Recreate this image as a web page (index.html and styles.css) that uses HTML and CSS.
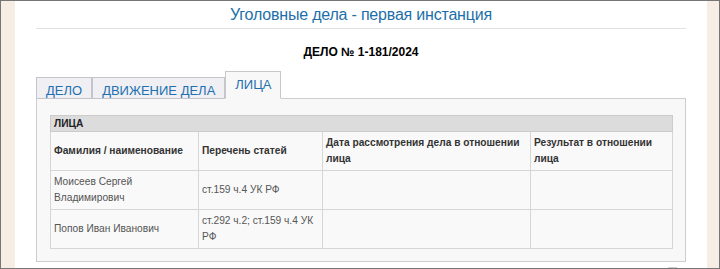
FILE: index.html
```html
<!DOCTYPE html>
<html lang="ru">
<head>
<meta charset="utf-8">
<title>Уголовные дела - первая инстанция</title>
<link rel="stylesheet" href="styles.css">
</head>
<body>
<div class="frame">
  <div class="page">
    <h1 class="title">Уголовные дела - первая инстанция</h1>
    <div class="rule"></div>
    <div class="case-no">ДЕЛО № 1-181/2024</div>
    <div class="tabs">
      <ul class="tab-list">
        <li class="tab">ДЕЛО</li>
        <li class="tab">ДВИЖЕНИЕ ДЕЛА</li>
        <li class="tab tab-active">ЛИЦА</li>
      </ul>
      <div class="panel">
        <table class="grid">
          <colgroup>
            <col class="c1"><col class="c2"><col class="c3"><col class="c4">
          </colgroup>
          <tr><th class="caption" colspan="4">ЛИЦА</th></tr>
          <tr class="head">
            <th>Фамилия / наименование</th>
            <th>Перечень статей</th>
            <th>Дата рассмотрения дела в отношении лица</th>
            <th>Результат в отношении лица</th>
          </tr>
          <tr>
            <td>Моисеев Сергей Владимирович</td>
            <td>ст.159 ч.4 УК РФ</td>
            <td></td>
            <td></td>
          </tr>
          <tr>
            <td>Попов Иван Иванович</td>
            <td>ст.292 ч.2; ст.159 ч.4 УК РФ</td>
            <td></td>
            <td></td>
          </tr>
        </table>
      </div>
    </div>
    <div class="foot"><span class="totop"></span></div>
  </div>
</div>
</body>
</html>
```
FILE: styles.css
```css
html, body {
  margin: 0;
  padding: 0;
}
body {
  font-family: "Liberation Sans", Arial, sans-serif;
  background: #ffffff;
}
.frame {
  width: 720px;
  height: 269px;
  box-sizing: border-box;
  border: 1px solid #767676;
  background: #f6eee5;
  padding: 0 12px 0 14px;
  overflow: hidden;
}
.page {
  background: #ffffff;
  height: 100%;
  box-sizing: border-box;
  padding: 3px 21px 0 21px;
  overflow: hidden;
}
.title {
  margin: 0;
  font-size: 16px;
  line-height: 22px;
  letter-spacing: -0.2px;
  font-weight: normal;
  color: #1d6fa9;
  text-align: center;
}
.rule {
  margin-top: 2px;
  height: 1px;
  background: #e2e2e2;
}
.case-no {
  margin-top: 16px;
  font-size: 12px;
  line-height: 14px;
  font-weight: bold;
  color: #000;
  text-align: center;
}
.tabs {
  margin-top: 12px;
}
.tab-list {
  list-style: none;
  margin: 0 0 -1px 0;
  padding: 0;
  display: flex;
  align-items: flex-end;
}
.tab {
  font-size: 13px;
  line-height: 15px;
  color: #1e70b0;
  background: #efeff4;
  border: 1px solid #c4c4cc;
  padding: 5px 9px 0 9px;
}
.tab-active {
  background: #f8f8f8;
  border-color: #c8c8c8;
  border-bottom-color: #f8f8f8;
  padding-bottom: 6px;
  position: relative;
  z-index: 1;
}
.panel {
  border: 1px solid #cdcdcd;
  background: #f8f8f8;
  padding: 16px 13px 12px 13px;
}
.grid {
  width: 100%;
  border-collapse: collapse;
  table-layout: fixed;
  background: #f9f9f9;
  font-size: 10.2px;
  line-height: 16px;
}
.c1 { width: 148px; }
.c2 { width: 124px; }
.c3 { width: 208px; }
.c4 { width: 142px; }
.grid th,
.grid td {
  border: 1px solid #d6d6d6;
  padding: 3px 3px;
  text-align: left;
  vertical-align: middle;
}
.grid th {
  font-weight: bold;
  color: #333;
}
.grid td {
  color: #555;
  height: 32px;
}
.grid .caption {
  background: #dcdcdc;
  color: #222;
  padding: 0 3px;
  line-height: 15px;
  border-color: #cccccc;
}
.grid .head th {
  height: 32px;
}
.foot {
  display: flex;
  justify-content: flex-end;
  padding-right: 9px;
  margin-top: 5px;
}
.totop {
  display: block;
  width: 7px;
  height: 7px;
  border: 1px solid #cfcfcf;
  background: #fafafa;
}
```
